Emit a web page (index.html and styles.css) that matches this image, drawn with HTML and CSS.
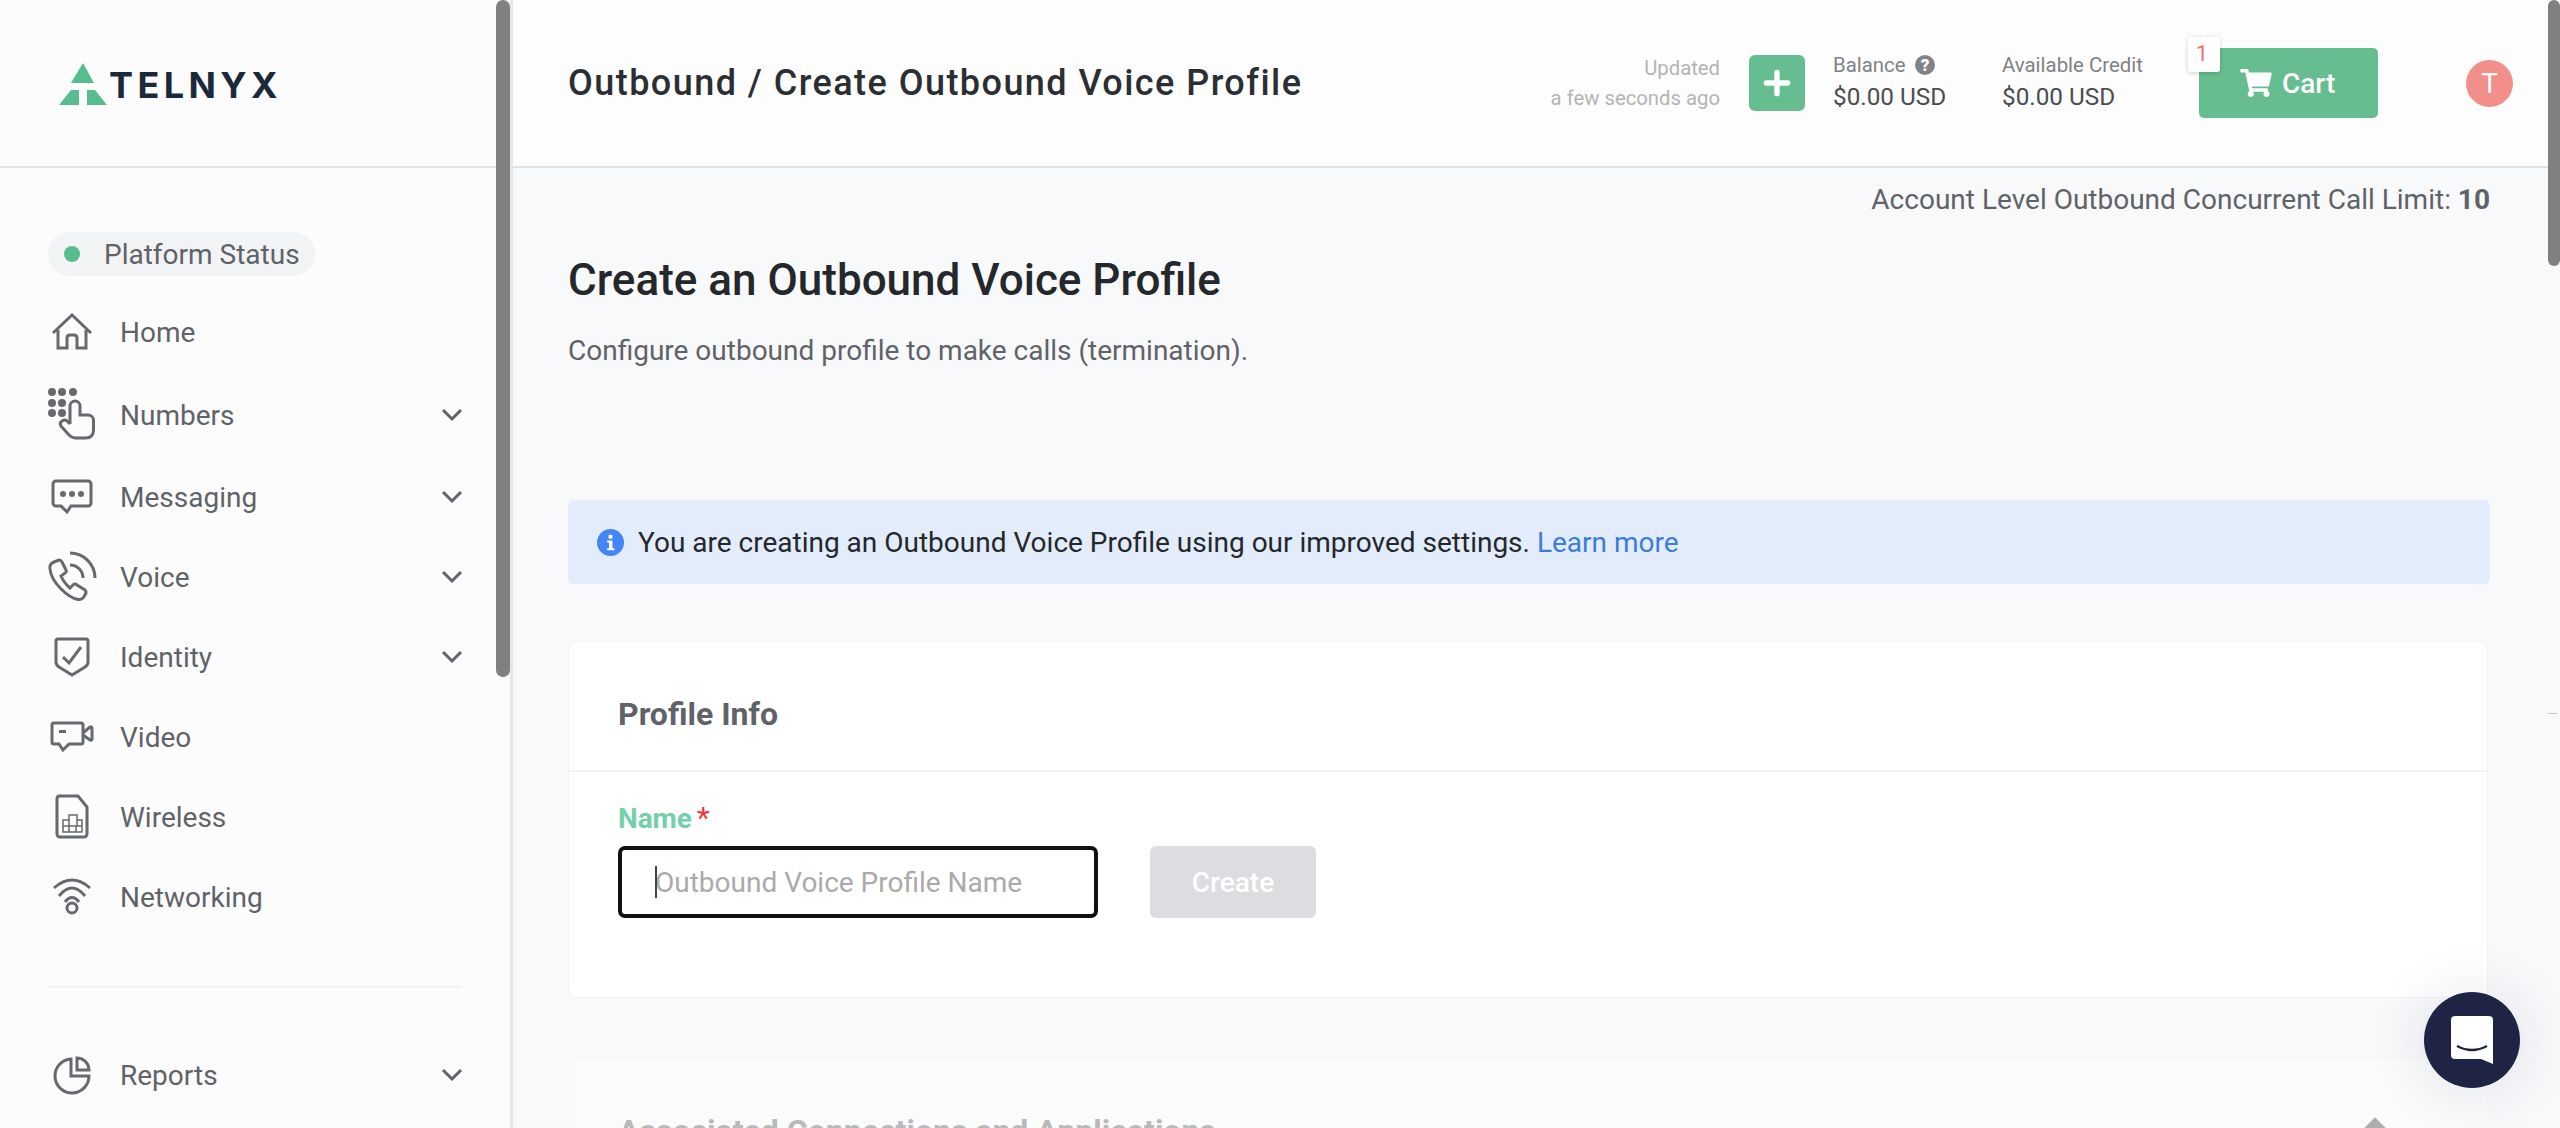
FILE: index.html
```html
<!DOCTYPE html>
<html lang="en">
<head>
<meta charset="utf-8">
<title>Create Outbound Voice Profile</title>
<link rel="stylesheet" href="styles.css">
</head>
<body>
<div class="app">
  <aside class="sidebar">
    <div class="logo">
      <svg class="logo-mark" viewBox="0 0 50 44"><path d="M25 1 36 21H13ZM1 43 13 28H21V43ZM29 28H37L49 43H29Z"/></svg>
      <span class="logo-text">TELNYX</span>
    </div>
    <div class="nav">
      <div class="status"><span class="status-dot"></span>Platform Status</div>
      <div class="row row-home">
        <svg class="ico" viewBox="-26 -26 52 52"><path d="M-19 1 0-17 19 1M-14-2V16H-5V6Q-5 3-2 3H2Q5 3 5 6V16H14V-2"/></svg>
        <span class="label">Home</span>
      </div>
      <div class="row row-numbers">
        <svg class="ico" viewBox="-26 -26 52 52"><g class="dots"><circle cx="-20" cy="-23" r="4"/><circle cx="-10" cy="-23" r="4"/><circle cx="1" cy="-23" r="4"/><circle cx="-20" cy="-12" r="4"/><circle cx="-10" cy="-12" r="4"/><circle cx="-20" cy="-2" r="4"/><circle cx="-10" cy="-2" r="4"/></g><path d="M-2 9V-9A5 5 0 0 1 8-9V0H16A5.500 5.500 0 0 1 21.500 5.500V15Q21.500 23 13.500 23H4Q0 23-3 20L-11 11Q-13 8-10 6Q-7 4-5 6L-2 9"/></svg>
        <span class="label">Numbers</span>
        <svg class="chev" viewBox="0 0 24 24"><path d="M3 7 12 16 21 7"/></svg>
      </div>
      <div class="row row-messaging">
        <svg class="ico" viewBox="-26 -26 52 52"><path d="M-16-16H16A3 3 0 0 1 19-13V6A3 3 0 0 1 16 9H-1L-5 15-11 9H-16A3 3 0 0 1-19 6V-13A3 3 0 0 1-16-16Z"/><g class="dots"><circle cx="-9" cy="-3" r="3"/><circle cx="0" cy="-3" r="3"/><circle cx="9" cy="-3" r="3"/></g></svg>
        <span class="label">Messaging</span>
        <svg class="chev" viewBox="0 0 24 24"><path d="M3 7 12 16 21 7"/></svg>
      </div>
      <div class="row">
        <svg class="ico" viewBox="-26 -26 52 52"><path d="M-22-8Q-23-13-18-15L-13-17Q-11-17-10-15L-6-7Q-5-5-7-4L-11-1Q-8 6-2 11L1 8Q3 6 5 8L13 13Q15 15 13 18L11 21Q9 23 6 22.500C-4 21-21 5-22-8ZM-2-24A25 25 0 0 1 23 1M-2-12A13 13 0 0 1 11 1"/></svg>
        <span class="label">Voice</span>
        <svg class="chev" viewBox="0 0 24 24"><path d="M3 7 12 16 21 7"/></svg>
      </div>
      <div class="row">
        <svg class="ico" viewBox="-26 -26 52 52"><path d="M-14-18H14Q16-18 16-16V5Q16 8 13 10L0 18-13 10Q-16 8-16 5V-16Q-16-18-14-18ZM-9 0-3 6 9-10"/></svg>
        <span class="label">Identity</span>
        <svg class="chev" viewBox="0 0 24 24"><path d="M3 7 12 16 21 7"/></svg>
      </div>
      <div class="row">
        <svg class="ico" viewBox="-26 -26 52 52"><path d="M-18-14H9A2 2 0 0 1 11-12V5A2 2 0 0 1 9 7H-3L-9 13-13 7H-18A2 2 0 0 1-20 5V-12A2 2 0 0 1-18-14ZM11-4 18-10Q20-11 20-8V2Q20 4 18 3L11-2"/><rect class="dots" x="-13" y="-7" width="7" height="3"/></svg>
        <span class="label">Video</span>
      </div>
      <div class="row">
        <svg class="ico" viewBox="-26 -26 52 52"><path d="M-13-21H6L15-10V17A3 3 0 0 1 12 20H-12A3 3 0 0 1-15 17V-18A3 3 0 0 1-13-21Z"/><path class="thin" d="M-9 3H-3V-2H5V3H10V15H-9ZM-9 9H10M-3 3V9M5 3V9M-3 9V15M4 9V15"/></svg>
        <span class="label">Wireless</span>
      </div>
      <div class="row">
        <svg class="ico" viewBox="-26 -26 52 52"><path d="M-18-9Q0-25 18-9M-13-1Q0-17 13-1M-7 5Q0-4 7 5"/><circle cx="0" cy="11" r="5"/></svg>
        <span class="label">Networking</span>
      </div>
      <div class="nav-divider"></div>
      <div class="row">
        <svg class="ico" viewBox="-26 -26 52 52"><path d="M-1-16A17 17 0 1 0 17 1H-1ZM5-17A12 12 0 0 1 17-5H5Z"/></svg>
        <span class="label">Reports</span>
        <svg class="chev" viewBox="0 0 24 24"><path d="M3 7 12 16 21 7"/></svg>
      </div>
    </div>
  </aside>

  <main class="main">
    <header class="topbar">
      <div class="crumb">Outbound / Create Outbound Voice Profile</div>
      <div class="meta">
        <div class="updated"><div>Updated</div><div>a few seconds ago</div></div>
        <div class="plus"><svg viewBox="0 0 24 24"><path d="M12 4V20M4 12H20"/></svg></div>
        <div class="money money-balance">
          <div class="money-label">Balance <svg class="help" viewBox="0 0 20 20"><circle cx="10" cy="10" r="10"/><text x="10" y="16" text-anchor="middle">?</text></svg></div>
          <div class="money-value">$0.00 USD</div>
        </div>
        <div class="money money-credit">
          <div class="money-label">Available Credit</div>
          <div class="money-value">$0.00 USD</div>
        </div>
        <div class="cart">
          <span class="cart-badge">1</span>
          <svg class="cart-ico" viewBox="0 0 576 512"><path d="M528.12 301.319l47.273-208C578.806 78.301 567.391 64 551.99 64H159.208l-9.166-44.81C147.758 8.021 137.93 0 126.529 0H24C10.745 0 0 10.745 0 24v16c0 13.255 10.745 24 24 24h69.883l70.248 343.435C147.325 417.1 136 435.222 136 456c0 30.928 25.072 56 56 56s56-25.072 56-56c0-15.674-6.447-29.835-16.824-40h209.647C430.447 426.165 424 440.326 424 456c0 30.928 25.072 56 56 56s56-25.072 56-56c0-22.172-12.888-41.332-31.579-50.405l5.517-24.276c3.413-15.018-8.002-29.319-23.403-29.319H218.117l-6.545-32h293.145c11.206 0 20.92-7.754 23.403-18.681z"/></svg>
          <span>Cart</span>
        </div>
        <div class="avatar">T</div>
      </div>
    </header>

    <div class="content">
      <div class="limit">Account Level Outbound Concurrent Call Limit: <b>10</b></div>
      <h1 class="title">Create an Outbound Voice Profile</h1>
      <p class="subtitle">Configure outbound profile to make calls (termination).</p>
      <div class="alert">
        <svg class="info" viewBox="0 0 28 28"><circle cx="14" cy="14" r="14"/><rect x="12" y="6" width="4" height="4" rx="1"/><path d="M10.500 12H16V20H18V22H10.500V20H12.500V14H10.500Z"/></svg>
        <span>You are creating an Outbound Voice Profile using our improved settings. <a class="link">Learn more</a></span>
      </div>
      <section class="card">
        <div class="card-head">Profile Info</div>
        <div class="card-body">
          <div class="field-label">Name<span class="req">*</span></div>
          <div class="field-row">
            <div class="input-wrap">
              <input class="input" type="text" placeholder="Outbound Voice Profile Name">
              <span class="caret"></span>
            </div>
            <button class="create" type="button">Create</button>
          </div>
        </div>
      </section>
      <section class="card card-faded">
        <div class="card-head card-head-flex">
          <span>Associated Connections and Applications</span>
          <svg class="collapse" viewBox="0 0 40 28"><path d="M4 22 20 6 36 22"/></svg>
        </div>
      </section>
    </div>
  </main>

  <div class="thumb thumb-side"></div>
  <div class="thumb thumb-page"></div>
  <div class="tick"></div>
  <div class="chat">
    <svg viewBox="0 0 42 48"><path d="M4 0H38A4 4 0 0 1 42 4V48L30 43H4A4 4 0 0 1 0 39V4A4 4 0 0 1 4 0Z"/><path class="smile" d="M6 30Q21 38 36 30"/></svg>
  </div>
</div>
</body>
</html>
```

FILE: styles.css
```css
* { box-sizing: border-box; }
html, body { margin: 0; height: 100%; overflow: hidden; }
body { font-family: Roboto, "Noto Sans", sans-serif; color: #5f6368; background: #f8f9fb; }

.app { position: relative; display: flex; width: 2560px; height: 1128px; overflow: hidden; }

/* Sidebar */
.sidebar { width: 513px; flex: none; height: 100%; background: #fcfcfd; border-right: 3px solid #e6e6e8; }
.logo { height: 168px; border-bottom: 2px solid #e2e2e2; width: 513px; padding: 62px 0 0 58px; display: flex; align-items: flex-start; }
.logo-mark { width: 50px; height: 44px; fill: #57bd8f; flex: none; }
.logo-text { margin: 1px 0 0 1px; font-family: Inter, Roboto, sans-serif; font-weight: 700; font-size: 36px; line-height: 44px; letter-spacing: 4.4px; color: #1b2a3a; }

.nav { padding: 64px 46px 0 46px; }
.status { display: inline-flex; align-items: center; height: 44px; width: 267px; margin-left: 2px; padding-left: 16px; border-radius: 22px; background: #f2f3f5; font-size: 28px; }
.status-dot { width: 16px; height: 16px; border-radius: 50%; background: #57bd8f; margin-right: 24px; }

.row { display: flex; align-items: center; height: 80px; }
.row-home { margin-top: 16px; }
.row-numbers { margin-top: 3px; }
.row-messaging { margin-top: 2px; }
.ico { width: 52px; height: 52px; flex: none; fill: none; stroke: #66696e; stroke-width: 3; overflow: visible; }
.ico .dots { fill: #66696e; stroke: none; }
.ico .thin { stroke-width: 1.5; }
.label { margin-left: 22px; font-size: 28px; flex: 1; }
.chev { width: 24px; height: 24px; flex: none; fill: none; stroke: #5f6368; stroke-width: 3; }
.nav-divider { height: 2px; margin: 49px 2px 47px 2px; background: #f2f2f3; }

/* Main */
.main { flex: 1; min-width: 0; height: 100%; }
.topbar { display: flex; align-items: center; height: 168px; border-bottom: 2px solid #e2e2e2; background: #fdfdfd; padding: 0 47px 0 55px; }
.crumb { font-size: 36px; font-weight: 500; letter-spacing: 1.45px; color: #2b2f33; margin-top: -1px; }
.meta { margin-left: auto; display: flex; align-items: center; }
.updated { width: 260px; text-align: right; font-size: 20.3px; line-height: 30px; color: #b4b4b6; }
.plus { width: 56px; height: 56px; margin-left: 29px; border-radius: 6px; background: #66bd8f; display: flex; align-items: center; justify-content: center; }
.plus svg { width: 32px; height: 32px; fill: none; stroke: #fff; stroke-width: 4; stroke-linecap: round; }
.money { margin-top: -2px; }
.money-balance { width: 169px; margin-left: 28px; }
.money-credit { width: 197px; }
.money-label { display: flex; align-items: center; gap: 9px; height: 30px; font-size: 20.4px; color: #808286; }
.help { width: 20px; height: 20px; fill: #808286; }
.help text { fill: #fff; font-size: 17px; font-weight: 900; }
.money-value { height: 34px; line-height: 34px; font-size: 24.3px; color: #4a4d52; }
.cart { position: relative; width: 179px; height: 70px; border-radius: 5px; background: #66bd8f; color: #fff; font-size: 28px; font-weight: 500; display: flex; align-items: center; padding-left: 41px; gap: 10px; }
.cart-ico { width: 32px; height: 28px; fill: #fff; }
.cart-badge { position: absolute; left: -11px; top: -11px; width: 32px; height: 35px; padding-right: 4px; border-radius: 3px; background: #fff; color: #ee6f6b; font-size: 22px; font-weight: 400; text-align: center; line-height: 34px; box-shadow: 0 1px 5px rgba(0,0,0,.18); }
.avatar { width: 47px; height: 47px; margin-left: 88px; border-radius: 50%; background: #f28f8a; color: #fff; font-size: 28px; display: flex; align-items: center; justify-content: center; }

.content { padding: 15px 70px 0 55px; }
.limit { height: 34px; line-height: 34px; text-align: right; font-size: 28px; }
.limit b { font-weight: 700; }
.title { margin: 39px 0 0; height: 48px; line-height: 48px; font-size: 44px; font-weight: 500; color: #24272b; }
.subtitle { margin: 29px 0 0; height: 36px; line-height: 36px; font-size: 28px; }
.alert { display: flex; align-items: center; gap: 14px; height: 84px; margin-top: 131px; padding-left: 29px; border-radius: 6px; background: #e3ecfa; font-size: 28px; color: #24272b; }
.info { width: 27px; height: 27px; flex: none; fill: #4285f4; }
.info rect, .info path { fill: #fff; }
.link { color: #3b7dd8; }

.card { margin-top: 57px; height: 357px; background: #fff; border-radius: 8px; border: 1px solid #f3f4f5; margin-right: 2px; }
.card-head { height: 130px; padding: 15px 49px 0; display: flex; align-items: center; border-bottom: 2px solid #f3f3f5; font-size: 32px; font-weight: 700; color: #5f6368; }
.card-body { padding: 30px 49px 0; }
.field-label { height: 30px; line-height: 32px; font-size: 28px; font-weight: 700; letter-spacing: -0.1px; color: #74d0aa; }
.req { margin-left: 5px; color: #ee3a36; font-weight: 400; font-size: 30px; }
.field-row { display: flex; gap: 52px; margin-top: 14px; }
.input-wrap { position: relative; width: 480px; height: 72px; }
.input { width: 100%; height: 100%; border: 4px solid #111; border-radius: 7px; padding: 0 0 0 33px; background: #fff; font: 400 28px Roboto, sans-serif; outline: none; }
.input::placeholder { color: #aaaaac; opacity: 1; }
.caret { position: absolute; left: 37px; top: 20px; width: 2px; height: 32px; background: #444; }
.create { width: 166px; height: 72px; border: 0; border-radius: 6px; background: #dcdde1; color: #fff; font: 500 28px Roboto, sans-serif; }
.card-faded { margin-top: 59px; height: 300px; background: #fafbfb; border-color: #f6f7f8; }
.card-head-flex { justify-content: space-between; padding-right: 92px; border-bottom: 0; color: #b8b9bb; }
.collapse { width: 40px; height: 28px; fill: none; stroke: #aeaeb0; stroke-width: 8; }

/* Overlays */
.thumb { position: absolute; top: 0; background: #808080; }
.thumb-side { left: 496px; width: 14px; height: 677px; border-radius: 7px; }
.thumb-page { left: 2548px; width: 12px; height: 266px; border-radius: 6px; }
.tick { position: absolute; left: 2548px; top: 713px; width: 9px; height: 1px; background: #c9c9c9; }
.chat { position: absolute; left: 2424px; top: 992px; width: 96px; height: 96px; border-radius: 50%; background: #1f2444; display: flex; align-items: center; justify-content: center; box-shadow: 0 2px 60px rgba(31,36,68,.12); }
.chat svg { width: 42px; height: 48px; fill: #fff; }
.chat .smile { fill: none; stroke: #1f2444; stroke-width: 2.5; }
```
